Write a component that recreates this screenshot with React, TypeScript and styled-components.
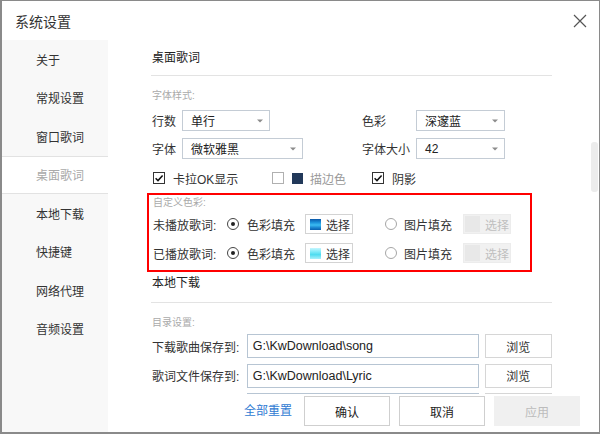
import styled, { createGlobalStyle } from 'styled-components'

const GlobalStyle = createGlobalStyle`
  * { box-sizing: border-box; }
  html, body {
    margin: 0;
    padding: 0;
    background: #ffffff;
  }
  body {
    font-family: 'Liberation Sans', 'Noto Sans CJK SC', sans-serif;
    font-size: 12px;
    color: #333;
  }
`

const Window = styled.div`
  width: 600px;
  height: 434px;
  border: 1px solid #8a8a8a;
  border-left-width: 2px;
  border-bottom-width: 2px;
  background: #fff;
  display: flex;
  flex-direction: column;
  overflow: hidden;
`

const TitleBar = styled.div`
  flex: none;
  height: 39px;
  display: flex;
  align-items: center;
  justify-content: space-between;
  padding: 0 12px 0 13px;
`

const Title = styled.div`
  font-size: 14px;
  color: #333;
`

const CloseBtn = styled.button`
  border: 0;
  padding: 0;
  background: none;
  width: 14px;
  height: 14px;
  display: flex;
`

const Body = styled.div`
  flex: 1;
  min-height: 0;
  display: flex;
`

const Sidebar = styled.nav`
  flex: none;
  width: 106px;
  background: #f8f8f8;
`

const NavItem = styled.div<{ $active?: boolean }>`
  height: 38.5px;
  display: flex;
  align-items: center;
  padding-left: 34px;
  font-size: 12px;
  color: ${(p) => (p.$active ? '#a9a9a9' : '#333')};
  background: ${(p) => (p.$active ? '#fff' : 'transparent')};
  border-top: 1px solid ${(p) => (p.$active ? '#e2e2e2' : 'transparent')};
  border-bottom: 1px solid ${(p) => (p.$active ? '#e2e2e2' : 'transparent')};
`

const Main = styled.div`
  flex: 1;
  display: flex;
  flex-direction: column;
  min-width: 0;
`

const Scroller = styled.div`
  flex: 1;
  min-height: 0;
  display: flex;
  overflow: hidden;
`

const Content = styled.div`
  flex: none;
  width: 444px;
  padding-left: 43px;
`

const Track = styled.div`
  margin-left: auto;
  margin-right: 1px;
  width: 7px;
`

const Thumb = styled.div`
  margin-top: 102px;
  height: 50px;
  border-radius: 3px;
  background: #ececec;
`

const Heading = styled.div<{ $top: number; $h: number }>`
  height: ${(p) => p.$h}px;
  padding-top: ${(p) => p.$top}px;
  line-height: 14px;
  font-size: 12px;
  color: #222;
  border-bottom: 1px solid #e3e3e3;
  padding-left: 1px;
`

const SectionLabel = styled.div<{ $top: number; $bottom: number }>`
  padding-top: ${(p) => p.$top}px;
  margin-bottom: ${(p) => p.$bottom}px;
  line-height: 14px;
  font-size: 10px;
  color: #aaa;
  padding-left: 1px;
`

const FieldRow = styled.div`
  display: flex;
  align-items: center;
  height: 21px;
  margin-bottom: 7px;
`

const Field = styled.div<{ $w?: number }>`
  display: flex;
  align-items: center;
  width: ${(p) => (p.$w ? `${p.$w}px` : 'auto')};
`

const FieldLabel = styled.span<{ $w: number }>`
  width: ${(p) => p.$w}px;
  padding-left: 1px;
  font-size: 12px;
  color: #333;
`

const Select = styled.div<{ $w: number }>`
  width: ${(p) => p.$w}px;
  height: 21px;
  border: 1px solid #c4ccd5;
  background: #fff;
  display: flex;
  align-items: center;
  justify-content: space-between;
  padding: 0 6px 0 8px;
  font-size: 12px;
  color: #222;
`

const CheckRow = styled.div`
  display: flex;
  align-items: center;
  height: 20px;
  margin-top: 9px;
`

const CheckItem = styled.label<{ $w?: number; $pl?: number; $muted?: boolean }>`
  display: flex;
  align-items: center;
  gap: 8px;
  width: ${(p) => (p.$w ? `${p.$w}px` : 'auto')};
  padding-left: ${(p) => p.$pl ?? 0}px;
  font-size: 12px;
  color: ${(p) => (p.$muted ? '#9a9a9a' : '#333')};
`

const Box = styled.span<{ $on?: boolean }>`
  width: 12px;
  height: 12px;
  border: 1px solid ${(p) => (p.$on ? '#333' : '#b0b0b0')};
  background: #fff;
  display: flex;
  align-items: center;
  justify-content: center;
`

const ColorChip = styled.span`
  width: 11px;
  height: 11px;
  background: #22395a;
  margin-right: -1px;
`

const ColorBox = styled.div`
  margin-top: 5px;
  margin-left: -4px;
  width: 385px;
  border: 2px solid #ff0000;
  padding: 1px 0 7px 3px;
`

const ColorRow = styled.div<{ $gap?: number }>`
  display: flex;
  align-items: center;
  height: 20px;
  margin-top: ${(p) => p.$gap ?? 0}px;
`

const Option = styled.span<{ $ml?: number; $gap: number }>`
  display: flex;
  align-items: center;
  gap: ${(p) => p.$gap}px;
  margin-left: ${(p) => p.$ml ?? 0}px;
  font-size: 12px;
  color: #333;
`

const Radio = styled.span<{ $on?: boolean }>`
  width: 12px;
  height: 12px;
  border-radius: 50%;
  border: 1px solid ${(p) => (p.$on ? '#444' : '#a6a6a6')};
  display: flex;
  align-items: center;
  justify-content: center;

  &::after {
    content: '';
    width: 4px;
    height: 4px;
    border-radius: 50%;
    background: ${(p) => (p.$on ? '#222' : 'transparent')};
  }
`

const ChooseBtn = styled.span<{ $disabled?: boolean; $ml: number }>`
  margin-left: ${(p) => p.$ml}px;
  width: 48px;
  height: 20px;
  display: flex;
  align-items: center;
  gap: 5px;
  padding-left: ${(p) => (p.$disabled ? 1 : 4)}px;
  border: 1px solid ${(p) => (p.$disabled ? '#ececec' : '#d3d3d3')};
  background: ${(p) => (p.$disabled ? '#f1f1f1' : '#fff')};
  color: ${(p) => (p.$disabled ? '#bfbfbf' : '#333')};
  font-size: 12px;
`

const Swatch = styled.span<{ $kind: 'blue' | 'cyan' | 'none' }>`
  width: ${(p) => (p.$kind === 'none' ? 15 : 11)}px;
  height: ${(p) => (p.$kind === 'none' ? 16 : 11)}px;
  background: ${(p) =>
    p.$kind === 'blue'
      ? 'linear-gradient(to bottom, #0b57a8 0%, #1a8fd8 30%, #3bbcf2 55%, #1b86d0 78%, #0a5fae 100%)'
      : p.$kind === 'cyan'
      ? 'linear-gradient(to bottom, #c6f6ff 0%, #7eeaf8 35%, #4fdcf0 60%, #a8f0fb 100%)'
      : '#e8e8e8'};
`

const PathRow = styled.div`
  display: flex;
  align-items: center;
  height: 24px;
  margin-bottom: 5.5px;
`

const PathLabel = styled.span`
  width: 98px;
  padding-left: 1px;
  font-size: 12px;
  color: #333;
`

const PathInput = styled.div`
  width: 237px;
  height: 24px;
  border: 1px solid #b7c5d3;
  padding-left: 5px;
  display: flex;
  align-items: center;
  font-family: 'Liberation Sans', sans-serif;
  font-size: 12.5px;
  color: #222;
`

const BrowseBtn = styled.button`
  margin-left: 6px;
  width: 69px;
  height: 24px;
  border: 1px solid #d6d6d6;
  background: #fff;
  font-family: inherit;
  font-size: 12px;
  color: #333;
  padding: 0;
`

const Footer = styled.div`
  flex: none;
  height: 38px;
  background: #fff;
  display: flex;
  justify-content: flex-end;
  align-items: flex-start;
  padding: 2px 19px 0 0;
  gap: 9px;
`

const ResetLink = styled.a`
  height: 30px;
  line-height: 30px;
  margin-right: 3px;
  font-size: 12px;
  color: #2f7bd3;
  text-decoration: none;
`

const FooterBtn = styled.button<{ $disabled?: boolean }>`
  width: 86px;
  height: 30px;
  padding: 0;
  border: 1px solid ${(p) => (p.$disabled ? '#f0f0f0' : '#cfcfcf')};
  background: ${(p) => (p.$disabled ? '#f0f0f0' : '#fff')};
  color: ${(p) => (p.$disabled ? '#bcbcbc' : '#222')};
  font-family: inherit;
  font-size: 12px;
`

function Arrow() {
  return (
    <svg width="6" height="4" viewBox="0 0 6 4">
      <path d="M0 0.5 L6 0.5 L3 3.5 Z" fill="#8c8c8c" />
    </svg>
  )
}

function Tick() {
  return (
    <svg width="10" height="10" viewBox="0 0 10 10">
      <path d="M1.6 5.2 L4 7.6 L8.6 2.4" fill="none" stroke="#111" strokeWidth="1.5" />
    </svg>
  )
}

const navItems = ['关于', '常规设置', '窗口歌词', '桌面歌词', '本地下载', '快捷键', '网络代理', '音频设置']

export default function App() {
  return (
    <>
      <GlobalStyle />
      <Window>
        <TitleBar>
          <Title>系统设置</Title>
          <CloseBtn aria-label="关闭">
            <svg width="14" height="14" viewBox="0 0 14 14">
              <path d="M1 1 L13 13 M13 1 L1 13" stroke="#555" strokeWidth="1.2" />
            </svg>
          </CloseBtn>
        </TitleBar>

        <Body>
          <Sidebar>
            {navItems.map((n) => (
              <NavItem key={n} $active={n === '桌面歌词'}>
                {n}
              </NavItem>
            ))}
          </Sidebar>

          <Main>
            <Scroller>
              <Content>
                <Heading $top={11} $h={36}>桌面歌词</Heading>
                <SectionLabel $top={13} $bottom={7}>字体样式:</SectionLabel>

                <FieldRow>
                  <Field $w={210}>
                    <FieldLabel $w={31}>行数</FieldLabel>
                    <Select $w={88}>单行<Arrow /></Select>
                  </Field>
                  <Field>
                    <FieldLabel $w={55}>色彩</FieldLabel>
                    <Select $w={89}>深邃蓝<Arrow /></Select>
                  </Field>
                </FieldRow>
                <FieldRow>
                  <Field $w={210}>
                    <FieldLabel $w={31}>字体</FieldLabel>
                    <Select $w={121}>微软雅黑<Arrow /></Select>
                  </Field>
                  <Field>
                    <FieldLabel $w={55}>字体大小</FieldLabel>
                    <Select $w={89}>42<Arrow /></Select>
                  </Field>
                </FieldRow>

                <CheckRow>
                  <CheckItem $w={121} $pl={2}>
                    <Box $on><Tick /></Box>卡拉OK显示
                  </CheckItem>
                  <CheckItem $w={100} $muted>
                    <Box /><ColorChip />描边色
                  </CheckItem>
                  <CheckItem>
                    <Box $on><Tick /></Box>阴影
                  </CheckItem>
                </CheckRow>

                <ColorBox>
                  <SectionLabel $top={0} $bottom={4}>自定义色彩:</SectionLabel>
                  <ColorRow>
                    <FieldLabel $w={75}>未播放歌词:</FieldLabel>
                    <Option $gap={8}><Radio $on />色彩填充</Option>
                    <ChooseBtn $ml={10}><Swatch $kind="blue" />选择</ChooseBtn>
                    <Option $gap={7} $ml={32}><Radio />图片填充</Option>
                    <ChooseBtn $ml={11} $disabled><Swatch $kind="none" />选择</ChooseBtn>
                  </ColorRow>
                  <ColorRow $gap={9}>
                    <FieldLabel $w={75}>已播放歌词:</FieldLabel>
                    <Option $gap={8}><Radio $on />色彩填充</Option>
                    <ChooseBtn $ml={10}><Swatch $kind="cyan" />选择</ChooseBtn>
                    <Option $gap={7} $ml={32}><Radio />图片填充</Option>
                    <ChooseBtn $ml={11} $disabled><Swatch $kind="none" />选择</ChooseBtn>
                  </ColorRow>
                </ColorBox>

                <Heading $top={4} $h={31}>本地下载</Heading>
                <SectionLabel $top={13} $bottom={4}>目录设置:</SectionLabel>

                <PathRow>
                  <PathLabel>下载歌曲保存到:</PathLabel>
                  <PathInput>G:\KwDownload\song</PathInput>
                  <BrowseBtn>浏览</BrowseBtn>
                </PathRow>
                <PathRow>
                  <PathLabel>歌词文件保存到:</PathLabel>
                  <PathInput>G:\KwDownload\Lyric</PathInput>
                  <BrowseBtn>浏览</BrowseBtn>
                </PathRow>
                {/* next row, scrolled under the footer: only its top edge shows */}
                <PathRow>
                  <PathLabel />
                  <PathInput />
                  <BrowseBtn />
                </PathRow>
              </Content>
              <Track>
                <Thumb />
              </Track>
            </Scroller>

            <Footer>
              <ResetLink href="#">全部重置</ResetLink>
              <FooterBtn>确认</FooterBtn>
              <FooterBtn>取消</FooterBtn>
              <FooterBtn $disabled>应用</FooterBtn>
            </Footer>
          </Main>
        </Body>
      </Window>
    </>
  )
}
